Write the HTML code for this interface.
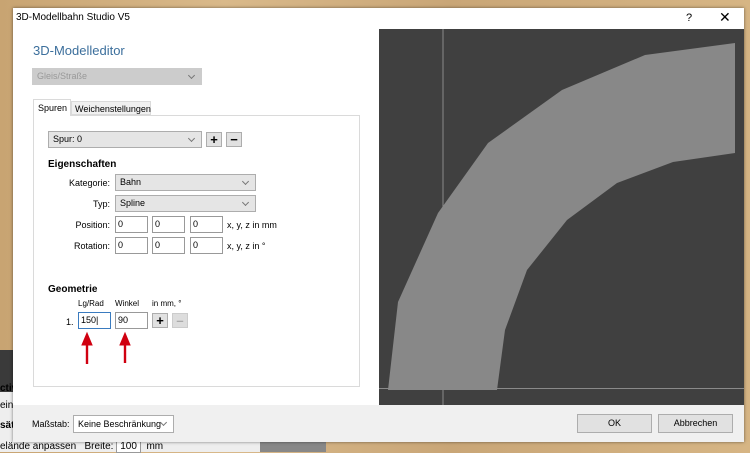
<!DOCTYPE html>
<html><head><meta charset="utf-8"><style>
body{margin:0;width:750px;height:452px;overflow:hidden;position:relative;background:linear-gradient(90deg,#c8a472,#d9b98a 30%,#c9a677 60%,#d6b584);font-family:"Liberation Sans",sans-serif;font-size:9px;color:#000}
.a{position:absolute}
.dlg{left:13px;top:8px;width:731px;height:434px;background:#fff;box-shadow:0 0 3px rgba(0,0,0,.5)}
.combo{background:#e5e5e5;border:1px solid #adadad;box-sizing:border-box;padding:0 4px;font-size:9px;line-height:15px}
.combo:after{content:"";position:absolute;right:7px;top:4px;width:4px;height:4px;border-right:1px solid #777;border-bottom:1px solid #777;transform:rotate(45deg)}
.inp{background:#fff;border:1px solid #999;box-sizing:border-box;padding:0 2px;font-size:9px;line-height:15px}
.btn{background:#e1e1e1;border:1px solid #adadad;box-sizing:border-box;text-align:center;font-weight:bold;font-size:13px;line-height:13px}
.r{text-align:right}
</style></head><body>
<div class="a" style="left:0;top:350px;width:13px;height:42px;background:#3a3a3a"></div>
<div class="a" style="left:0;top:392px;width:13px;height:50px;background:#eee"></div>
<div class="a" style="left:0;top:383px;font-weight:bold;font-size:10px">ctiv</div>
<div class="a" style="left:0;top:400px;font-size:10px">eine</div>
<div class="a" style="left:0;top:420px;font-weight:bold;font-size:10px">sät</div>
<div class="a" style="left:0;top:442px;width:260px;height:10px;background:#eee"></div>
<div class="a" style="left:0;top:441px;font-size:10px">elände anpassen&nbsp;&nbsp;&nbsp;Breite: <span style="border:1px solid #999;background:#fff;padding:0 3px">100</span> &nbsp;mm</div>
<div class="a" style="left:260px;top:442px;width:66px;height:10px;background:#888"></div>
<div class="a dlg"></div>
<div class="a" style="left:16px;top:12px;font-size:10px">3D-Modellbahn Studio V5</div>
<div class="a" style="left:686px;top:12px;font-size:11px">?</div>
<div class="a" style="left:719px;top:9px;font-size:14px">✕</div>
<div class="a" style="left:13px;top:405px;width:731px;height:37px;background:#f0f0f0"></div>
<div class="a" style="left:33px;top:43px;font-size:13px;color:#3c6f9c">3D-Modelleditor</div>
<div class="a combo" style="left:32px;top:68px;width:170px;height:17px;color:#999;background:#ccc;border-color:#ccc">Gleis/Straße</div>
<div class="a" style="left:33px;top:115px;width:327px;height:272px;border:1px solid #dadada;box-sizing:border-box"></div>
<div class="a" style="left:33px;top:99px;width:38px;height:17px;background:#fff;border:1px solid #dadada;border-bottom:none;box-sizing:border-box;padding:3px 4px">Spuren</div>
<div class="a" style="left:71px;top:101px;width:80px;height:14px;background:#f0f0f0;border:1px solid #dadada;box-sizing:border-box;padding:2px 3px">Weichenstellungen</div>
<div class="a combo" style="left:48px;top:131px;width:154px;height:17px">Spur: 0</div>
<div class="a btn" style="left:206px;top:132px;width:16px;height:15px">+</div>
<div class="a btn" style="left:226px;top:132px;width:16px;height:15px">−</div>
<div class="a" style="left:48px;top:159px;font-weight:bold;font-size:10px">Eigenschaften</div>
<div class="a r" style="left:40px;top:178px;width:70px">Kategorie:</div>
<div class="a combo" style="left:115px;top:174px;width:141px;height:17px">Bahn</div>
<div class="a r" style="left:40px;top:199px;width:70px">Typ:</div>
<div class="a combo" style="left:115px;top:195px;width:141px;height:17px">Spline</div>
<div class="a r" style="left:40px;top:220px;width:70px">Position:</div>
<div class="a inp" style="left:115px;top:216px;width:33px;height:17px">0</div>
<div class="a inp" style="left:152px;top:216px;width:33px;height:17px">0</div>
<div class="a inp" style="left:190px;top:216px;width:33px;height:17px">0</div>
<div class="a" style="left:227px;top:220px">x, y, z in mm</div>
<div class="a r" style="left:40px;top:241px;width:70px">Rotation:</div>
<div class="a inp" style="left:115px;top:237px;width:33px;height:17px">0</div>
<div class="a inp" style="left:152px;top:237px;width:33px;height:17px">0</div>
<div class="a inp" style="left:190px;top:237px;width:33px;height:17px">0</div>
<div class="a" style="left:227px;top:241px">x, y, z in °</div>
<div class="a" style="left:48px;top:284px;font-weight:bold;font-size:10px">Geometrie</div>
<div class="a" style="left:78px;top:299px;font-size:8px">Lg/Rad</div>
<div class="a" style="left:115px;top:299px;font-size:8px">Winkel</div>
<div class="a" style="left:152px;top:299px;font-size:8px">in mm, °</div>
<div class="a" style="left:66px;top:317px">1.</div>
<div class="a inp" style="left:78px;top:312px;width:33px;height:17px;border-color:#3a7bbf">150|</div>
<div class="a inp" style="left:115px;top:312px;width:33px;height:17px">90</div>
<div class="a btn" style="left:152px;top:313px;width:16px;height:15px">+</div>
<div class="a btn" style="left:172px;top:313px;width:16px;height:15px;background:#ddd;color:#aaa;border-color:#ccc">–</div>
<svg class="a" style="left:0;top:0" width="750" height="452">
<g fill="#d00010" stroke="#d00010"><path d="M87 364V343" stroke-width="2.4"/><path d="M82 345L87 333L92 345Z"/>
<path d="M125 363V343" stroke-width="2.4"/><path d="M120 345L125 333L130 345Z"/></g>
<rect x="379" y="29" width="365" height="376" fill="#404040"/>
<line x1="443" y1="29" x2="443" y2="405" stroke="#8a8a8a"/>
<line x1="379" y1="388.5" x2="744" y2="388.5" stroke="#8a8a8a"/>
<polygon points="388,390 398,302 438,213 488,143 562,90 645,55 735,43 735,153 673,162 617,183 567,220 527,270 505,330 497,390" fill="#888"/>
</svg>
<div class="a" style="left:32px;top:419px">Maßstab:</div>
<div class="a combo" style="left:73px;top:415px;width:101px;height:18px;background:#fff;font-size:9px;line-height:16px">Keine Beschränkung</div>
<div class="a" style="left:577px;top:414px;width:75px;height:19px;background:#e1e1e1;border:1px solid #adadad;box-sizing:border-box;text-align:center;line-height:17px">OK</div>
<div class="a" style="left:658px;top:414px;width:75px;height:19px;background:#e1e1e1;border:1px solid #adadad;box-sizing:border-box;text-align:center;line-height:17px">Abbrechen</div>
</body></html>
